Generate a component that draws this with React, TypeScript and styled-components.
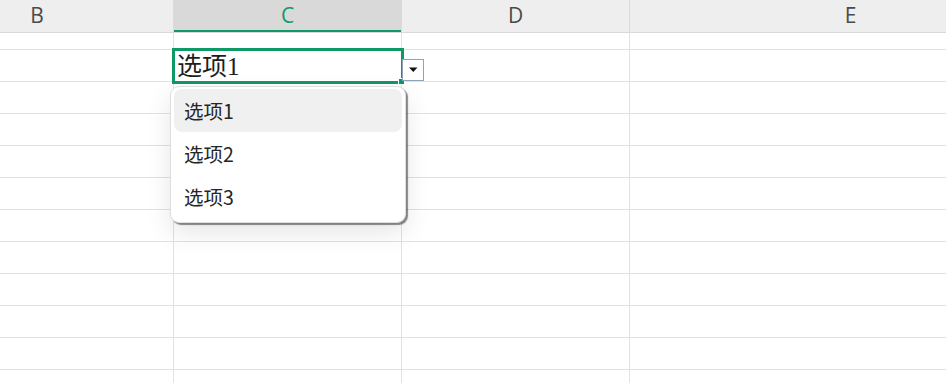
import styled, { createGlobalStyle } from "styled-components";

const GlobalStyle = createGlobalStyle`
  html, body {
    margin: 0;
    padding: 0;
    background: #ffffff;
  }
`;

const GREEN = "#0f9966";
const GRID = "#e2e2e2";

const Sheet = styled.div`
  width: 946px;
  height: 383px;
  overflow: hidden;
  position: relative;
  font-family: "Open Sans", "Noto Sans CJK SC", sans-serif;
`;
const Grid = styled.div`
  margin-left: -99px;
  width: 1171px;
  display: flex;
  flex-direction: column;
`;
const Row = styled.div<{ h: number }>`
  display: grid;
  grid-template-columns: 273px 228px 228px 442px;
  height: ${props => props.h}px;
`;
const HeadCell = styled.div<{ active?: boolean }>`
  box-sizing: border-box;
  height: 33px;
  display: flex;
  align-items: center;
  justify-content: center;
  padding-bottom: 2px;
  font-size: 21px;
  color: ${props => (props.active ? GREEN : "#4a4a4a")};
  background-color: ${props => (props.active ? "#d9d9d9" : "#eeeeee")};
  border-bottom: 1px solid #d9d9d9;
  border-right: 1px solid ${props => (props.active ? "#d9d9d9" : "#dcdcdc")};
  box-shadow: ${props => (props.active ? `inset 0 -2px 0 ${GREEN}` : "none")};
`;
const Cell = styled.div`
  box-sizing: border-box;
  position: relative;
  border-right: 1px solid ${GRID};
  border-bottom: 1px solid ${GRID};
`;
const Selection = styled.div`
  position: absolute;
  left: -2px;
  top: -2px;
  right: -3px;
  bottom: -3px;
  border: 3px solid ${GREEN};
  display: flex;
  align-items: flex-end;
  padding: 0 0 0 2px;
  font-family: "Liberation Serif", "Noto Sans CJK SC", serif;
  font-size: 25px;
  line-height: 28px;
  color: #1e1e1e;
  z-index: 2;
`;
const Handle = styled.span`
  position: absolute;
  right: -4px;
  bottom: -4px;
  width: 5px;
  height: 5px;
  background: ${GREEN};
  border: 1px solid #ffffff;
`;
const DropButton = styled.div`
  position: absolute;
  left: 228px;
  top: 9px;
  width: 22px;
  height: 22px;
  box-sizing: border-box;
  border: 1px solid #8fa2bb;
  background: #ffffff;
  display: flex;
  align-items: center;
  justify-content: center;
  z-index: 3;
`;
const Menu = styled.div`
  position: absolute;
  left: -4px;
  top: 36px;
  width: 236px;
  box-sizing: border-box;
  padding: 2px 3px 4px 3px;
  background: #ffffff;
  border: 1px solid #dedede;
  border-radius: 9px;
  box-shadow: 2px 2px 1px rgba(0, 0, 0, 0.45), 0 10px 26px rgba(0, 0, 0, 0.1);
  display: flex;
  flex-direction: column;
  z-index: 4;
`;
const MenuItem = styled.div<{ hover?: boolean }>`
  height: 43px;
  display: flex;
  align-items: center;
  padding-left: 10px;
  border-radius: 8px;
  font-family: "Noto Sans CJK SC", sans-serif;
  font-size: 19.5px;
  color: #262626;
  background: ${props => (props.hover ? "#f0f0f0" : "transparent")};
`;

const columns = ["B", "C", "D", "E"];
const rowHeights = [17, 32, 32, 32, 32, 32, 32, 32, 32, 32, 32, 32];

const Caret = () => (
  <svg width="10" height="6" viewBox="0 0 10 6">
    <path d="M1 0.5 L9.5 0.5 L5.25 5 Z" fill="#111" />
  </svg>
);

export default function App() {
  return (
    <Sheet>
      <GlobalStyle />
      <Grid>
        <Row h={33}>
          {columns.map(c => (
            <HeadCell key={c} active={c === "C"}>
              {c}
            </HeadCell>
          ))}
        </Row>
        {rowHeights.map((h, r) => (
          <Row key={r} h={h}>
            {columns.map(c => (
              <Cell key={c}>
                {r === 1 && c === "C" && (
                  <>
                    <Selection>
                      选项1
                      <Handle />
                    </Selection>
                    <DropButton>
                      <Caret />
                    </DropButton>
                    <Menu>
                      <MenuItem hover>选项1</MenuItem>
                      <MenuItem>选项2</MenuItem>
                      <MenuItem>选项3</MenuItem>
                    </Menu>
                  </>
                )}
              </Cell>
            ))}
          </Row>
        ))}
      </Grid>
    </Sheet>
  );
}
